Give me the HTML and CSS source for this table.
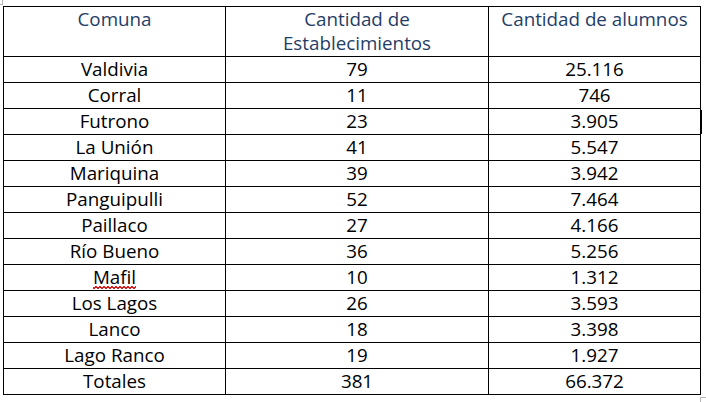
FILE: index.html
```html
<!DOCTYPE html>
<html lang="es">
<head>
<meta charset="utf-8">
<title>Comunas</title>
<link rel="stylesheet" href="styles.css">
</head>
<body>
<div class="page">
  <span class="mark mark-tl"></span>
  <table class="data">
    <colgroup>
      <col class="c1"><col class="c2"><col class="c3">
    </colgroup>
    <thead>
      <tr><th>Comuna</th><th>Cantidad de<br>Establecimientos</th><th>Cantidad de alumnos</th></tr>
    </thead>
    <tbody>
      <tr><td>Valdivia</td><td>79</td><td>25.116</td></tr>
      <tr><td>Corral</td><td>11</td><td>746</td></tr>
      <tr><td>Futrono</td><td>23</td><td>3.905</td></tr>
      <tr><td>La Unión</td><td>41</td><td>5.547</td></tr>
      <tr><td>Mariquina</td><td>39</td><td>3.942</td></tr>
      <tr><td>Panguipulli</td><td>52</td><td>7.464</td></tr>
      <tr><td>Paillaco</td><td>27</td><td>4.166</td></tr>
      <tr><td>Río Bueno</td><td>36</td><td>5.256</td></tr>
      <tr><td><span class="spell">Mafil</span></td><td>10</td><td>1.312</td></tr>
      <tr><td>Los Lagos</td><td>26</td><td>3.593</td></tr>
      <tr><td>Lanco</td><td>18</td><td>3.398</td></tr>
      <tr><td>Lago Ranco</td><td>19</td><td>1.927</td></tr>
      <tr><td>Totales</td><td>381</td><td>66.372</td></tr>
    </tbody>
  </table>
  <span class="mark-bar"></span>
  <span class="mark mark-br"></span>
</div>
</body>
</html>
```

FILE: styles.css
```css
html, body {
  margin: 0;
  padding: 0;
  background: #ffffff;
}
.page {
  position: relative;
  width: 706px;
  height: 402px;
  padding: 6px 0 0 3px;
  box-sizing: border-box;
}
.data {
  border-collapse: collapse;
  font-family: "Open Sans", "Liberation Sans", sans-serif;
  font-size: 18.8px;
  color: #000000;
  table-layout: fixed;
  width: 697px;
}
.c1 { width: 222px; }
.c2 { width: 263px; }
.c3 { width: 212px; }
.data th, .data td {
  border: 1px solid #000000;
  text-align: center;
  padding: 0;
}
.data th {
  font-weight: normal;
  color: #1f3d66;
  vertical-align: top;
  height: 50px;
  line-height: 24px;
  padding-top: 0;
  box-sizing: border-box;
}
.data td {
  height: 25px;
  line-height: 25px;
}
.spell {
  display: inline-block;
  line-height: 22px;
  padding-bottom: 1px;
  background-image:
    linear-gradient(135deg, transparent 40%, #d42020 40%, #d42020 60%, transparent 60%),
    linear-gradient(45deg, transparent 40%, #d42020 40%, #d42020 60%, transparent 60%);
  background-size: 4px 3px;
  background-repeat: repeat-x;
  background-position: 0 100%, 2px 100%;
}
.mark {
  position: absolute;
  width: 6px;
  height: 5px;
  border-color: #b8b8b8;
  border-style: solid;
  border-width: 0;
}
.mark-tl {
  left: -4px;
  top: -1px;
  border-right-width: 1px;
  border-bottom-width: 1px;
}
.mark-br {
  left: 700px;
  top: 397px;
  border-left-width: 1px;
  border-top-width: 1px;
}
.mark-bar {
  position: absolute;
  left: 701px;
  top: 110px;
  width: 1px;
  height: 24px;
  background: #000000;
}
```
